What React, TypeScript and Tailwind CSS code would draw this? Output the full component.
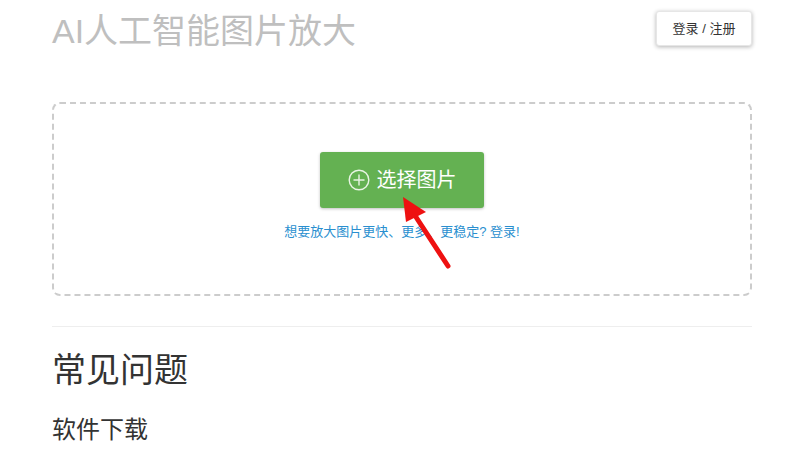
import React from "react";

export default function App() {
  const cjk = { fontFamily: '"Liberation Sans", "Noto Sans CJK SC", sans-serif' };
  return (
    <div className="w-[801px] h-[451px] bg-white overflow-hidden relative" style={cjk}>
      <div className="w-[700px] ml-[52px]">
        <div className="flex items-start justify-between pt-[11px]">
          <h1 className="text-[34px] leading-[42px] text-[#bfbfbf] mt-[-1px]">AI人工智能图片放大</h1>
          <button className="w-[96px] h-[35px] bg-white rounded-[3px] shadow-[0_1px_4px_rgba(0,0,0,0.3)] text-[13px] text-[#333] border border-[#e6e6e6]">
            登录 / 注册
          </button>
        </div>
        <div className="mt-[50px] h-[194px] border-2 border-dashed border-[#cccccc] rounded-[8px] flex flex-col items-center">
          <button className="mt-[48px] w-[164px] h-[56px] bg-[#64b152] rounded-[3px] shadow-[0_1px_3px_rgba(0,0,0,0.25)] flex items-center justify-center gap-[7px] text-white text-[20px]">
            <svg width="22" height="22" viewBox="0 0 22 22" fill="none" stroke="#e8f4e4" strokeWidth="1.4">
              <circle cx="11" cy="11" r="9.8" />
              <path d="M11 5.5v11M5.5 11h11" />
            </svg>
            <span>选择图片</span>
          </button>
          <div className="mt-[15px] text-[13px] text-[#2a8fcf] leading-[17px]">
            想要放大图片更快、更多、更稳定? 登录!
          </div>
        </div>
        <div className="mt-[30px] h-px bg-[#eeeeee]" />
        <h2 className="mt-[21px] text-[34px] leading-[44px] text-[#333]">常见问题</h2>
        <h3 className="mt-[22px] text-[24px] leading-[32px] text-[#333]">软件下载</h3>
      </div>
      <svg className="absolute left-0 top-0 pointer-events-none" width="801" height="451">
        <line x1="448" y1="266" x2="414" y2="214" stroke="#ee1111" strokeWidth="5" strokeLinecap="round" />
        <polygon points="403,197 426,212 406,222" fill="#ee1111" />
      </svg>
    </div>
  );
}
